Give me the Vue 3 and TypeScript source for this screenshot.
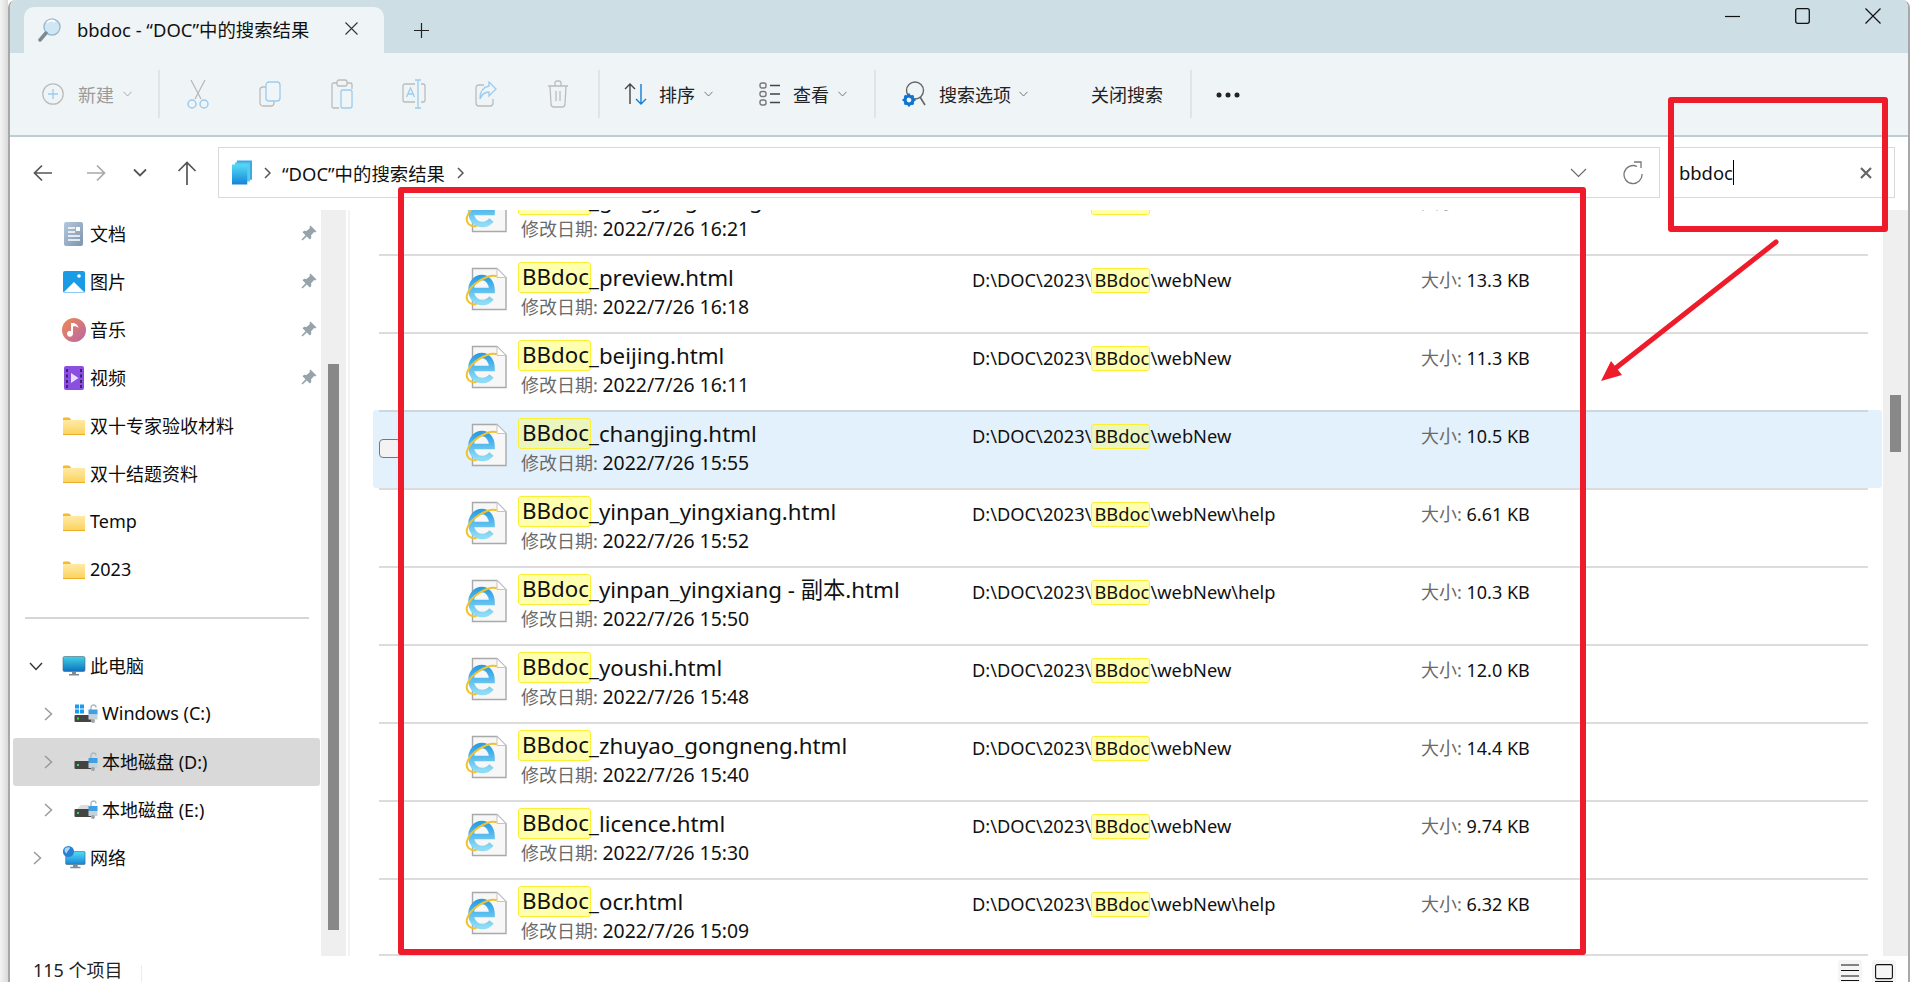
<script setup lang="ts">
interface NavItem { label: string; icon: string; pin?: boolean; level?: number; arrow?: string; active?: boolean }
interface FileRow { name: string; stem: string; date: string; tail: string; size: string; selected?: boolean }

const quick: NavItem[] = [
  { label: '文档', icon: 'i-doc', pin: true },
  { label: '图片', icon: 'i-pic', pin: true },
  { label: '音乐', icon: 'i-music', pin: true },
  { label: '视频', icon: 'i-video', pin: true },
  { label: '双十专家验收材料', icon: 'i-folder' },
  { label: '双十结题资料', icon: 'i-folder' },
  { label: 'Temp', icon: 'i-folder' },
  { label: '2023', icon: 'i-folder' },
]
const tree: NavItem[] = [
  { label: '此电脑', icon: 'i-pc', arrow: 'down' },
  { label: 'Windows (C:)', icon: 'i-cdrive', arrow: 'right', level: 1 },
  { label: '本地磁盘 (D:)', icon: 'i-drive', arrow: 'right', level: 1, active: true },
  { label: '本地磁盘 (E:)', icon: 'i-drive', arrow: 'right', level: 1 },
  { label: '网络', icon: 'i-net', arrow: 'right' },
]
const files: FileRow[] = [
  { name: 'BBdoc', stem: '_gongyingshang.html', date: '2022/7/26 16:21', tail: 'webNew', size: '8.12 KB' },
  { name: 'BBdoc', stem: '_preview.html', date: '2022/7/26 16:18', tail: 'webNew', size: '13.3 KB' },
  { name: 'BBdoc', stem: '_beijing.html', date: '2022/7/26 16:11', tail: 'webNew', size: '11.3 KB' },
  { name: 'BBdoc', stem: '_changjing.html', date: '2022/7/26 15:55', tail: 'webNew', size: '10.5 KB', selected: true },
  { name: 'BBdoc', stem: '_yinpan_yingxiang.html', date: '2022/7/26 15:52', tail: 'webNew\\help', size: '6.61 KB' },
  { name: 'BBdoc', stem: '_yinpan_yingxiang - 副本.html', date: '2022/7/26 15:50', tail: 'webNew\\help', size: '10.3 KB' },
  { name: 'BBdoc', stem: '_youshi.html', date: '2022/7/26 15:48', tail: 'webNew', size: '12.0 KB' },
  { name: 'BBdoc', stem: '_zhuyao_gongneng.html', date: '2022/7/26 15:40', tail: 'webNew', size: '14.4 KB' },
  { name: 'BBdoc', stem: '_licence.html', date: '2022/7/26 15:30', tail: 'webNew', size: '9.74 KB' },
  { name: 'BBdoc', stem: '_ocr.html', date: '2022/7/26 15:09', tail: 'webNew\\help', size: '6.32 KB' },
]
</script>

<template>
  <div class="screen">
    <svg class="defs" width="0" height="0" aria-hidden="true">
      <defs>
        <linearGradient id="g-e" x1="0" y1="0" x2="0" y2="1"><stop offset="0" stop-color="#2a9fe6" /><stop offset="1" stop-color="#8fdcf6" /></linearGradient>
        <linearGradient id="g-folder" x1="0" y1="0" x2="0" y2="1"><stop offset="0" stop-color="#ffeaa5" /><stop offset="1" stop-color="#fcd25f" /></linearGradient>
        <linearGradient id="g-doc" x1="0" y1="0" x2="1" y2="1"><stop offset="0" stop-color="#b4c8dc" /><stop offset="1" stop-color="#7c95ad" /></linearGradient>
        <linearGradient id="g-music" x1="0" y1="0" x2="1" y2="1"><stop offset="0" stop-color="#f08a4e" /><stop offset="1" stop-color="#b765a8" /></linearGradient>
        <linearGradient id="g-pc" x1="0" y1="0" x2="0" y2="1"><stop offset="0" stop-color="#3ed3e6" /><stop offset="1" stop-color="#0f70c0" /></linearGradient>
        <linearGradient id="g-lib" x1="0" y1="0" x2="0" y2="1"><stop offset="0" stop-color="#54dcf6" /><stop offset="1" stop-color="#1585d8" /></linearGradient>
        <symbol id="i-ie" viewBox="0 0 42 44">
          <path d="M7.5 1.5H32L41 10.5V42.5H7.5Z" fill="#f7f7f7" stroke="#a9a9a9" stroke-width="1.4" />
          <path d="M32 1.5V10.5H41Z" fill="#fff" stroke="#c4c4c4" stroke-width="1" />
          <path d="M8 23.5H27C27 15 22 10.5 17 10.5C10 10.5 6 17 6 23C6 30.500 11 35.500 17.500 35.500C21 35.500 24 34 26.500 31" fill="none" stroke="url(#g-e)" stroke-width="5.600" />
          <path d="M31 9C23 7 5 17 2 28C0.500 34 5 38 11 37" fill="none" stroke="#f2c22e" stroke-width="2" stroke-linecap="round" />
        </symbol>
        <symbol id="i-doc" viewBox="0 0 24 24">
          <rect x="2" y="0" width="19" height="24" rx="2" fill="url(#g-doc)" />
          <path d="M6 6h7M6 10h7M6 14h12M6 18h12" stroke="#fff" stroke-width="1.300" />
          <rect x="14" y="5" width="4" height="4" fill="#fff" />
        </symbol>
        <symbol id="i-pic" viewBox="0 0 24 24">
          <rect x="1" y="1" width="22" height="22" rx="2" fill="#1a9be6" />
          <path d="M1.500 22.500L12 12L22.500 22.500Z" fill="#fff" />
          <circle cx="17" cy="6" r="1.800" fill="#fff" />
        </symbol>
        <symbol id="i-music" viewBox="0 0 24 24">
          <circle cx="12" cy="12" r="12" fill="url(#g-music)" />
          <path d="M11 5V15.500A3 3 0 1 1 9 13V5ZM11 5C13 5 16 6.500 16.500 10C15 8.500 13 8 11 8.500Z" fill="#fff" />
        </symbol>
        <symbol id="i-video" viewBox="0 0 24 24">
          <rect x="2" y="0" width="20" height="24" rx="2" fill="#8a4fe0" />
          <path d="M4 3h2v3H4zM4 8.500h2v3H4zM4 14h2v3H4zM4 19h2v3H4zM18 3h2v3h-2zM18 8.500h2v3h-2zM18 14h2v3h-2zM18 19h2v3h-2z" fill="#3d2470" />
          <path d="M9 7L16.500 12L9 17Z" fill="#e6ddf8" />
        </symbol>
        <symbol id="i-folder" viewBox="0 0 24 18">
          <path d="M1 3V1.500Q1 .5 2 .5H7L9 2.500V3Z" fill="#f8b920" />
          <path d="M1 3H23V17.500H1Z" fill="url(#g-folder)" />
          <path d="M1 17H23V18H1Z" fill="#eeae2c" />
        </symbol>
        <symbol id="i-pc" viewBox="0 0 24 20">
          <rect x="1" y="0.500" width="22" height="15" rx="1.500" fill="url(#g-pc)" stroke="#4d6675" stroke-width=".6" />
          <path d="M10 16h4v2h-4zM7 18h10v1.500H7z" fill="#7e8b95" />
        </symbol>
        <symbol id="i-drive" viewBox="0 0 24 20">
          <path d="M3 9L7 5H15V9Z" fill="#dcdcdc" />
          <rect x="0.500" y="9" width="17" height="8" rx="1" fill="#444" />
          <rect x="3" y="12" width="2" height="2" fill="#37e04a" />
          <path d="M17 7V3.500A2.500 2.500 0 0 1 22 3.500" fill="none" stroke="#aeb8c0" stroke-width="1.400" />
          <rect x="14.500" y="6" width="9" height="5" fill="#3fa0e0" />
          <rect x="14.500" y="11" width="9" height="5" fill="#c6d2da" />
          <circle cx="19" cy="17" r="2" fill="#9aa5ad" />
        </symbol>
        <symbol id="i-cdrive" viewBox="0 0 24 20">
          <path d="M1 .5h4v4H1zM6 .5h4v4H6zM1 5.500h4v4H1zM6 5.500h4v4H6z" fill="#1b9bee" />
          <rect x="0.500" y="11" width="17" height="7" rx="1" fill="#444" />
          <rect x="3" y="13.500" width="2" height="2" fill="#37e04a" />
          <path d="M17 6V3.500A2.500 2.500 0 0 1 22 3.500" fill="none" stroke="#aeb8c0" stroke-width="1.400" />
          <rect x="14.500" y="5.500" width="9" height="5" fill="#3fa0e0" />
          <rect x="14.500" y="10.500" width="9" height="5" fill="#c6d2da" />
          <circle cx="19" cy="17" r="2" fill="#9aa5ad" />
        </symbol>
        <symbol id="i-net" viewBox="0 0 26 26">
          <rect x="4" y="6" width="21" height="14" rx="1" fill="url(#g-lib)" stroke="#3b5766" stroke-width=".6" />
          <path d="M12 20.500h5v2h-5zM9 22.500h11v1.500H9z" fill="#7e8b95" />
          <circle cx="7" cy="6" r="6" fill="#2a7fd0" />
          <path d="M3 3C5 1 8 1 9 2C8 4 6 5 5 8C3 7 2.500 5 3 3Z" fill="#a8d8f8" />
        </symbol>
        <symbol id="i-pin" viewBox="0 0 16 16">
          <path d="M9.500 0.500L15.500 6.500L14 7.500L13 7L10 10.500L10.300 13L8.800 14.500L5.800 11.500L1.500 15.500L.5 14.500L4.500 10.200L1.500 7.200L3 5.700L5.500 6L9 3L8.500 2Z" fill="#97a3ab" />
        </symbol>
      </defs>
    </svg>

    <div class="outside-left"></div>
    <div class="win">
      <!-- title bar -->
      <header class="titlebar">
        <div class="tab">
          <svg class="tab-icon" width="24" height="26" viewBox="0 0 24 26">
            <circle cx="14" cy="10" r="8" fill="#cfe6f4" stroke="#9dbbd0" stroke-width="1.500" />
            <path d="M9 6c2-3 6-3 8-1" stroke="#fff" stroke-width="2" fill="none" />
            <path d="M8 16L2 23" stroke="#7d8a93" stroke-width="3.500" stroke-linecap="round" />
          </svg>
          <span class="tab-title">bbdoc - “DOC”中的搜索结果</span>
          <svg class="tab-close" width="13" height="13" viewBox="0 0 13 13"><path d="M.5.500l12 12M12.500.500l-12 12" stroke="#333" stroke-width="1.100" /></svg>
        </div>
        <svg class="tab-add" width="15" height="15" viewBox="0 0 15 15"><path d="M7.500 0v15M0 7.500h15" stroke="#222" stroke-width="1.200" /></svg>
        <div class="caption">
          <svg width="15" height="15" viewBox="0 0 15 15"><path d="M0 7.500h15" stroke="#111" stroke-width="1.200" /></svg>
          <svg width="15" height="16" viewBox="0 0 15 16"><rect x=".7" y=".7" width="13.600" height="14.600" rx="2" fill="none" stroke="#111" stroke-width="1.300" /></svg>
          <svg width="16" height="16" viewBox="0 0 16 16"><path d="M.5.500l15 15M15.500.500l-15 15" stroke="#111" stroke-width="1.200" /></svg>
        </div>
      </header>

      <!-- command bar -->
      <div class="toolbar">
        <div class="tool tool-new disabled">
          <svg width="22" height="22" viewBox="0 0 22 22"><circle cx="11" cy="11" r="10.200" fill="none" stroke="#bcbcbc" stroke-width="1.300" /><path d="M11 6v10M6 11h10" stroke="#9ccbee" stroke-width="1.300" /></svg>
          <span class="tool-gap14">新建</span>
          <svg class="chev" width="9" height="6" viewBox="0 0 9 6"><path d="M.5.800L4.500 5L8.500.800" fill="none" stroke="#aaa" /></svg>
        </div>
        <i class="tsep sep-new"></i>
        <div class="tool-icons">
          <svg width="22" height="30" viewBox="0 0 22 30"><path d="M4 1L14 20M18 1L8 20" stroke="#b9b9b9" stroke-width="1.300" /><circle cx="5" cy="25" r="4" fill="none" stroke="#9ccbee" stroke-width="1.500" /><circle cx="17" cy="25" r="4" fill="none" stroke="#9ccbee" stroke-width="1.500" /></svg>
          <svg width="22" height="26" viewBox="0 0 22 26"><rect x="1" y="6" width="14" height="19" rx="3" fill="none" stroke="#bcbcbc" stroke-width="1.300" /><rect x="7" y="1" width="14" height="19" rx="3" fill="#f0f5f8" stroke="#9ccbee" stroke-width="1.300" /></svg>
          <svg width="22" height="30" viewBox="0 0 22 30"><path d="M6 4H2.500Q1 4 1 5.500V27.500Q1 29 2.500 29H8M16 4H19.500Q21 4 21 5.500V10" fill="none" stroke="#bcbcbc" stroke-width="1.300" /><rect x="6" y="1" width="10" height="6" rx="2" fill="none" stroke="#bcbcbc" stroke-width="1.300" /><rect x="10" y="11" width="11" height="18" rx="2" fill="#f0f5f8" stroke="#9ccbee" stroke-width="1.300" /></svg>
          <svg width="24" height="30" viewBox="0 0 24 30"><path d="M13 5H3Q1 5 1 7V21Q1 23 3 23H13M19 5H21Q23 5 23 7V21Q23 23 21 23H19" fill="none" stroke="#bcbcbc" stroke-width="1.300" /><path d="M16 1V29M13 1H19M13 29H19" stroke="#9ccbee" stroke-width="1.300" /><path d="M4.500 18L8.500 9L12.500 18M6 15H11" fill="none" stroke="#9ccbee" stroke-width="1.300" /></svg>
          <svg width="22" height="26" viewBox="0 0 22 26"><path d="M9 4H4Q1 4 1 7V22Q1 25 4 25H15Q18 25 18 22V18" fill="none" stroke="#bcbcbc" stroke-width="1.300" /><path d="M14 1L21 8L14 15V11C10 11 7 13 5 18C5 11 8 6 14 5Z" fill="none" stroke="#9ccbee" stroke-width="1.300" /></svg>
          <svg width="22" height="28" viewBox="0 0 22 28"><path d="M1 6H21M8 6V3Q8 1 10 1H12Q14 1 14 3V6M3 6L4 24Q4 27 7 27H15Q18 27 18 24L19 6M9 11V21M13 11V21" fill="none" stroke="#bcbcbc" stroke-width="1.300" /></svg>
        </div>
        <i class="tsep sep-icons"></i>
        <div class="tool tool-sort">
          <svg width="26" height="24" viewBox="0 0 26 24"><path d="M6 22V2M1 7L6 2L11 7" fill="none" stroke="#444" stroke-width="1.400" /><path d="M17 2V22M12 17L17 22L22 17" fill="none" stroke="#0f7fd8" stroke-width="1.400" /></svg>
          <span class="tool-gap9">排序</span>
          <svg class="chev" width="9" height="6" viewBox="0 0 9 6"><path d="M.5.800L4.500 5L8.500.800" fill="none" stroke="#777" /></svg>
        </div>
        <div class="tool tool-view">
          <svg width="21" height="24" viewBox="0 0 21 24"><rect x="1" y="1" width="6" height="5" rx="2" fill="none" stroke="#777" stroke-width="1.400" /><rect x="1" y="9.500" width="6" height="5" rx="2" fill="none" stroke="#777" stroke-width="1.400" /><rect x="1" y="18" width="6" height="5" rx="2" fill="none" stroke="#777" stroke-width="1.400" /><path d="M11 3.500H21M11 12H21M11 20.500H21" stroke="#444" stroke-width="1.300" /></svg>
          <span class="tool-gap13">查看</span>
          <svg class="chev" width="9" height="6" viewBox="0 0 9 6"><path d="M.5.800L4.500 5L8.500.800" fill="none" stroke="#777" /></svg>
        </div>
        <i class="tsep sep-view"></i>
        <div class="tool tool-search">
          <svg width="24" height="26" viewBox="0 0 24 26"><circle cx="13" cy="9.500" r="8.500" fill="none" stroke="#666" stroke-width="1.400" /><path d="M18 16L23 24" stroke="#666" stroke-width="1.600" /><circle cx="7" cy="19" r="4" fill="none" stroke="#0f74cf" stroke-width="3.200" /><path d="M7 12.500v2M7 23.500v2M.5 19h2M11.500 19h2M2.500 14.500l1.500 1.500M10 22l1.500 1.500M11.500 14.500L10 16M4 22l-1.500 1.500" stroke="#0f74cf" stroke-width="2" /></svg>
          <span class="tool-gap13">搜索选项</span>
          <svg class="chev chev-near" width="9" height="6" viewBox="0 0 9 6"><path d="M.5.800L4.500 5L8.500.800" fill="none" stroke="#777" /></svg>
        </div>
        <div class="tool tool-close"><span>关闭搜索</span></div>
        <i class="tsep sep-close"></i>
        <svg class="dots" width="24" height="6" viewBox="0 0 24 6"><circle cx="3" cy="3" r="2.500" fill="#222" /><circle cx="12" cy="3" r="2.500" fill="#222" /><circle cx="21" cy="3" r="2.500" fill="#222" /></svg>
      </div>

      <!-- address row -->
      <div class="addressrow">
        <svg class="nav nav-back" width="20" height="18" viewBox="0 0 20 18"><path d="M19 9H2M9 1.500L1.500 9L9 16.500" fill="none" stroke="#555" stroke-width="1.700" /></svg>
        <svg class="nav nav-fwd" width="20" height="18" viewBox="0 0 20 18"><path d="M1 9H18M11 1.500L18.500 9L11 16.500" fill="none" stroke="#a9a9a9" stroke-width="1.700" /></svg>
        <svg class="nav nav-down" width="14" height="9" viewBox="0 0 14 9"><path d="M1 1.500L7 7.500L13 1.500" fill="none" stroke="#555" stroke-width="1.800" /></svg>
        <svg class="nav nav-up" width="20" height="24" viewBox="0 0 20 24"><path d="M10 24V2M1.500 10L10 1.500L18.500 10" fill="none" stroke="#555" stroke-width="1.700" /></svg>
        <div class="address">
          <svg width="20" height="25" viewBox="0 0 21 25" class="addr-icon"><path d="M5 0H21V20H5Z" fill="#3aa9e4" /><path d="M3 2H19V22H3Z" fill="#5cc8f0" /><path d="M0 4H16V25H0Z" fill="url(#g-lib)" /></svg>
          <svg class="crumb crumb-a" width="7" height="12" viewBox="0 0 7 12"><path d="M1 1L6 6L1 11" fill="none" stroke="#555" stroke-width="1.500" /></svg>
          <span class="addr-text">“DOC”中的搜索结果</span>
          <svg class="crumb crumb-b" width="7" height="12" viewBox="0 0 7 12"><path d="M1 1L6 6L1 11" fill="none" stroke="#555" stroke-width="1.500" /></svg>
          <svg class="addr-chev" width="17" height="10" viewBox="0 0 17 10"><path d="M1 1L8.500 8.500L16 1" fill="none" stroke="#666" stroke-width="1.100" /></svg>
          <svg class="addr-refresh" width="20" height="24" viewBox="0 0 20 24"><path d="M14 5.500A9 9 0 1 0 19 13" fill="none" stroke="#777" stroke-width="1.300" /><path d="M11 1H18V7" fill="none" stroke="#777" stroke-width="1.300" /></svg>
        </div>
        <div class="search">
          <span class="search-text">bbdoc</span><i class="caret"></i>
          <svg class="search-x" width="12" height="12" viewBox="0 0 12 12"><path d="M1 1l10 10M11 1L1 11" stroke="#666" stroke-width="2.200" /></svg>
        </div>
      </div>

      <!-- body -->
      <div class="main">
        <nav class="sidebar">
          <div v-for="q in quick" :key="q.label" class="nav-row">
            <svg class="nav-icon"><use :href="'#' + q.icon" /></svg>
            <span class="nav-label">{{ q.label }}</span>
            <svg v-if="q.pin" class="pin" width="16" height="16"><use href="#i-pin" /></svg>
          </div>
          <div class="nav-divider"></div>
          <div v-for="t in tree" :key="t.label" class="nav-row" :class="{ active: t.active, lvl1: t.level === 1 }">
            <svg v-if="t.arrow === 'down'" class="tw" width="14" height="9" viewBox="0 0 14 9"><path d="M1 1L7 7.500L13 1" fill="none" stroke="#333" stroke-width="1.400" /></svg>
            <svg v-else class="tw tw-r" width="9" height="14" viewBox="0 0 9 14"><path d="M1 1L7.500 7L1 13" fill="none" stroke="#9a9a9a" stroke-width="1.500" /></svg>
            <svg class="nav-icon"><use :href="'#' + t.icon" /></svg>
            <span class="nav-label">{{ t.label }}</span>
          </div>
        </nav>
        <div class="vbar vbar-side"><i class="thumb thumb-side"></i></div>
        <div class="pane-gap"></div>
        <section class="list">
          <div class="list-inner">
            <div v-for="f in files" :key="f.stem" class="row" :class="{ selected: f.selected }">
              <i v-if="f.selected" class="check"></i>
              <svg class="ie" width="42" height="44"><use href="#i-ie" /></svg>
              <div class="col-name">
                <div class="fname"><span class="hit hit-name">{{ f.name }}</span>{{ f.stem }}</div>
                <div class="fdate"><span class="muted">修改日期:</span> <span class="date-val">{{ f.date }}</span></div>
              </div>
              <div class="col-path">D:\DOC\2023\<span class="hit hit-path">BBdoc</span>\{{ f.tail }}</div>
              <div class="col-size"><span class="muted">大小:</span> {{ f.size }}</div>
            </div>
          </div>
        </section>
        <div class="vbar"><i class="thumb thumb-list"></i></div>
      </div>

      <!-- status -->
      <footer class="status">
        <span class="status-text">115 个项目</span>
        <i class="status-sep"></i>
        <span class="view-btn view-first">
          <svg width="18" height="18" viewBox="0 0 18 18"><path d="M0 1h18M0 6.500h18M0 12h18M0 16.500h18" stroke="#111" stroke-width="1.100" /></svg>
        </span>
        <span class="view-btn view-second">
          <svg width="18" height="18" viewBox="0 0 18 18"><rect x=".6" y=".6" width="16.800" height="14" rx="1.500" fill="none" stroke="#111" stroke-width="1.100" /><path d="M0 17.500h18" stroke="#111" stroke-width="1.100" /></svg>
        </span>
      </footer>
    </div>
    <div class="outside-right"></div>

    <!-- red annotations -->
    <div class="mark mark-search"></div>
    <div class="mark mark-list"></div>
    <svg class="arrow" width="190" height="150" viewBox="1595 238 190 150">
      <path d="M1776 242L1612 371" stroke="#ee1c2b" stroke-width="5" stroke-linecap="round" fill="none" />
      <path d="M1601 381L1611 361L1622 375Z" fill="#ee1c2b" />
    </svg>
  </div>
</template>

<style>
html, body { margin: 0; background: #fff; }
</style>

<style scoped>
.screen {
  position: relative;
  display: flex;
  width: 1912px;
  height: 982px;
  overflow: hidden;
  font-family: "Noto Sans", "Noto Sans CJK SC", sans-serif;
  font-size: 18px;
  color: #111;
  background: #fff;
}
.defs { position: absolute; }
i { display: block; font-style: normal; }
.outside-left { width: 8px; flex: none; background: linear-gradient(90deg, #f4f4f4, #dadada); }
.outside-right { width: 2px; flex: none; background: #fff; }
.win {
  flex: 1;
  min-width: 0;
  display: flex;
  flex-direction: column;
  border-left: 2px solid #a8a8a8;
  border-right: 2px solid #a8a8a8;
  border-top-left-radius: 8px;
  border-top-right-radius: 8px;
  overflow: hidden;
  background: #fff;
}

/* title bar */
.titlebar {
  height: 53px;
  flex: none;
  display: flex;
  align-items: flex-end;
  padding-left: 14px;
  background: #cddee5;
  box-sizing: border-box;
}
.tab {
  width: 360px;
  height: 46px;
  display: flex;
  align-items: center;
  padding: 0 0 0 14px;
  box-sizing: border-box;
  background: #eff4f7;
  border-radius: 10px 10px 0 0;
}
.tab-icon { flex: none; }
.tab-title { margin-left: 15px; width: 234px; white-space: nowrap; line-height: 46px; font-size: 18.4px; }
.tab-close { margin-left: 34px; margin-top: -4px; }
.tab-add { margin: 0 0 15px 30px; }
.caption {
  margin-left: auto;
  align-self: flex-start;
  display: flex;
  align-items: center;
  margin-top: 8px;
  gap: 55px;
  padding-right: 27px;
}

/* toolbar */
.toolbar {
  height: 84px;
  flex: none;
  display: flex;
  align-items: center;
  box-sizing: border-box;
  background: #eff4f7;
  border-bottom: 2px solid #bccdd4;
}
.tool { display: flex; align-items: center; flex: none; white-space: nowrap; color: #222; }
.tool svg { flex: none; }
.tool.disabled { color: #9b9b9b; }
.tool-new { margin-left: 32px; }
.tool-gap14 { margin-left: 14px; }
.tool-gap13 { margin-left: 13px; }
.tool-gap9 { margin-left: 9px; }
.chev { margin-left: 9px; }
.chev-near { margin-left: 8px; }
.tsep { width: 2px; height: 48px; flex: none; background: #dfe4e7; }
.sep-new { margin-left: 26px; }
.tool-icons {
  width: 432px;
  margin-left: 2px;
  flex: none;
  display: grid;
  grid-template-columns: repeat(6, 72px);
  justify-items: center;
  align-items: center;
}
.sep-icons { margin-left: 4px; }
.tool-sort { margin-left: 24px; }
.tool-view { margin-left: 46px; }
.sep-view { margin-left: 27px; }
.tool-search { margin-left: 26px; }
.tool-close { margin-left: 63px; }
.sep-close { margin-left: 27px; }
.dots { margin-left: 24px; margin-top: 2px; }

/* address */
.addressrow {
  height: 73px;
  flex: none;
  display: flex;
  align-items: flex-start;
  padding-top: 10px;
  box-sizing: border-box;
}
.nav { flex: none; margin-top: 17px; }
.nav-back { margin-left: 23px; }
.nav-fwd { margin-left: 33px; }
.nav-down { margin-left: 27px; margin-top: 21px; }
.nav-up { margin-left: 30px; margin-top: 14px; }
.address {
  margin-left: 21px;
  width: 1442px;
  height: 51px;
  flex: none;
  box-sizing: border-box;
  border: 1.500px solid #d9d9d9;
  display: flex;
  align-items: center;
}
.addr-icon { margin-left: 13px; flex: none; }
.crumb { flex: none; }
.crumb-a { margin-left: 12px; }
.addr-text { margin-left: 11px; width: 163px; white-space: nowrap; color: #111; font-size: 18.4px; }
.crumb-b { margin-left: 12px; }
.addr-chev { margin-left: auto; }
.addr-refresh { margin: 0 16px 0 36px; }
.search {
  margin-left: 9px;
  width: 226px;
  height: 51px;
  flex: none;
  box-sizing: border-box;
  border: 1.500px solid #d9d9d9;
  display: flex;
  align-items: center;
  padding-left: 9px;
}
.search-text { color: #111; font-size: 18.4px; }
.caret { width: 1px; height: 25px; background: #000; margin-left: 0; }
.search-x { margin-left: auto; margin-right: 22px; }

/* main */
.main { flex: 1; min-height: 0; display: flex; }
.sidebar { width: 311px; flex: none; }
.nav-row {
  position: relative;
  height: 48px;
  margin-left: 3px;
  width: 307px;
  display: flex;
  align-items: center;
  padding-left: 49px;
  box-sizing: border-box;
  border-radius: 3px;
  color: #0c0c0c;
}
.nav-row.lvl1 { padding-left: 61px; }
.nav-row.active { background: #d9d9d9; }
.nav-icon { width: 24px; height: 24px; flex: none; }
.nav-label { margin-left: 4px; margin-top: -2px; white-space: nowrap; }
.pin { position: absolute; right: 3px; top: 15px; }
.tw { position: absolute; left: 16px; top: 20px; }
.tw-r { left: 20px; top: 17px; }
.lvl1 .tw-r { left: 31px; }
.nav-divider { height: 2px; margin: 23px 12px 23px 15px; background: #d6d6d6; }
.vbar { width: 25px; flex: none; background: #efefef; display: flex; justify-content: center; align-items: flex-start; }
.thumb { width: 11px; background: #888; }
.thumb-side { height: 566px; margin-top: 154px; }
.thumb-list { height: 57px; margin-top: 185px; }
.pane-gap { width: 4px; flex: none; background: linear-gradient(90deg, #fff 50%, #f3f3f3 50%); }

/* list */
.list { flex: 1; min-width: 0; overflow: hidden; }
.list-inner { margin-top: -34px; }
.row {
  position: relative;
  height: 78px;
  margin: 0 1px 0 23px;
  display: flex;
  box-sizing: border-box;
  padding-left: 92px;
  border-radius: 3px;
}
.row::before {
  content: "";
  position: absolute;
  top: 0;
  left: 6px;
  right: 14px;
  height: 2px;
  background: #dcdcdc;
}
.row:last-child::after {
  content: "";
  position: absolute;
  bottom: 0;
  left: 6px;
  right: 14px;
  height: 2px;
  background: #dcdcdc;
}
.row.selected { background: #e3f1fc; }
.row.selected::before { background: #cfd7de; }
.check {
  position: absolute;
  left: 6px;
  top: 29px;
  width: 22px;
  height: 19px;
  box-sizing: border-box;
  background: #f3f3f3;
  border: 1px solid #777;
  border-radius: 4px;
}
.ie { flex: none; margin-top: 13px; }
.col-name { width: 454px; margin-left: 11px; flex: none; padding-top: 8px; box-sizing: border-box; }
.fname { height: 31px; line-height: 31px; font-size: 22.3px; white-space: nowrap; color: #111; }
.hit {
  display: inline-block;
  box-sizing: border-box;
  background: #ffffb0;
  border: 1px solid #fbf034;
  border-radius: 3px;
}
.selected .hit { background: #ebf5bf; }
.hit-name { width: 73px; height: 31px; line-height: 28px; padding-left: 3px; margin-right: -2px; vertical-align: top; white-space: nowrap; }
.hit-path { width: 59px; height: 25px; line-height: 21px; margin-top: 1px; padding-left: 2px; vertical-align: top; white-space: nowrap; }
.fdate { margin-top: 1px; padding-left: 3px; line-height: 26px; white-space: nowrap; color: #111; }
.date-val { font-size: 19.4px; }
.muted { color: #6a6a6a; }
.col-path { width: 449px; flex: none; padding-top: 13px; line-height: 25px; white-space: nowrap; color: #111; box-sizing: border-box; font-size: 18.25px; }
.col-size { flex: none; padding-top: 14px; line-height: 25px; white-space: nowrap; color: #111; }

/* status */
.status {
  height: 26px;
  flex: none;
  display: flex;
  align-items: flex-end;
  padding-left: 23px;
  padding-right: 12px;
  box-sizing: border-box;
  line-height: 24px;
}
.status-text { width: 108px; white-space: nowrap; color: #222; }
.status-sep { width: 1px; height: 17px; background: #ececec; }
.view-btn {
  width: 24px;
  height: 22px;
  background: #f5f5f5;
  border-radius: 3px 3px 0 0;
  display: flex;
  justify-content: center;
  align-items: flex-end;
}
.view-first { margin-left: auto; }
.view-second { margin-left: 10px; }

/* annotations */
.mark {
  position: absolute;
  box-sizing: border-box;
  border: 6px solid #ee1c2b;
  border-radius: 3px;
  pointer-events: none;
}
.mark-search { left: 1668px; top: 97px; width: 220px; height: 135px; }
.mark-list { left: 398px; top: 187px; width: 1188px; height: 768px; }
.arrow { position: absolute; left: 1595px; top: 238px; }
</style>
